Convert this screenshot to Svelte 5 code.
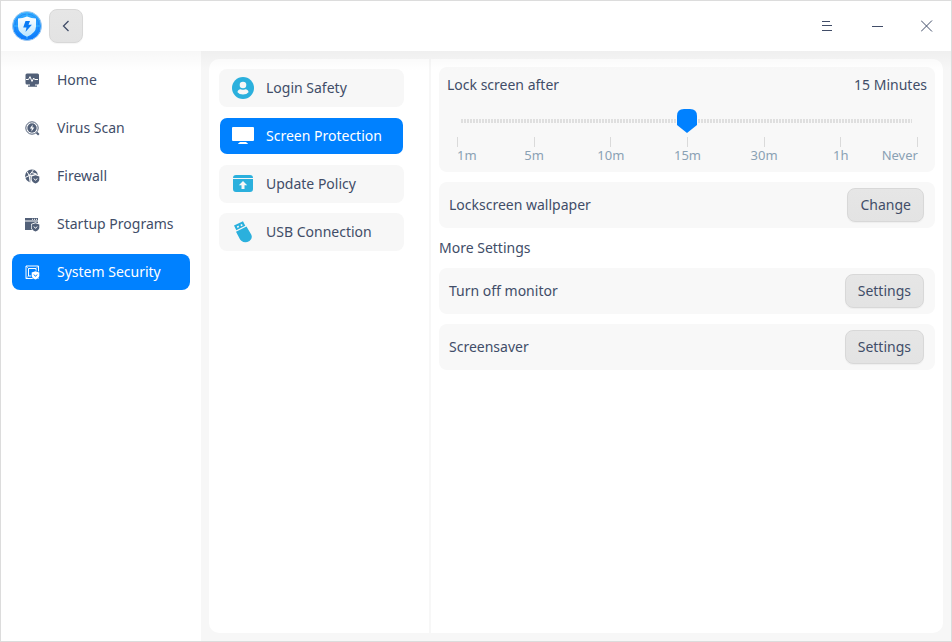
<script>
  const nav = ['Home', 'Virus Scan', 'Firewall', 'Startup Programs', 'System Security'];
  const sections = ['Login Safety', 'Screen Protection', 'Update Policy', 'USB Connection'];
  const stops = ['1m', '5m', '10m', '15m', '30m', '1h', 'Never'];
  const names = ['1 Minute', '5 Minutes', '10 Minutes', '15 Minutes', '30 Minutes', '1 Hour', 'Never'];
  let page = $state(4);
  let section = $state(1);
  let delay = $state(3);
</script>

{#snippet badge()}
  <path class="halo" d="M10.500 5.200 15 7v3.600q0 3-4.500 4.400Q6 13.600 6 10.600V7z" />
  <path d="M10.500 6.200 14.300 7.600v3q0 2.500-3.800 3.900-3.800-1.400-3.800-3.900v-3z" />
  <path class="tick" d="m8.900 9.500 1.600 1.900 1.600-1.900" />
{/snippet}

{#snippet navIcon(i)}
  <svg class="nav-icon" class:on={page === i} viewBox="0 0 15 15" aria-hidden="true">
    {#if i === 0}
      <path d="M2 .5h10.500q1.500 0 1.500 1.500v8q0 1.500-1.500 1.500H2Q.5 11.500.5 10V2Q.5.5 2 .5zM5 11.300h5v1.200h2v1.200H3v-1.200h2z" />
      <path class="tick" d="M1 6.500h2.500L5 3.600l2 4.900 1.700-3.500 1 1.500H13" />
    {:else if i === 1}
      <circle class="line" cx="7" cy="7" r="6.200" />
      <circle cx="7" cy="7" r="4.700" />
      <path class="bolt" d="M7.700 3.500 4.900 7.600h1.900L6.300 10.700l3-4.200H7.400z" />
      <path class="line thick" d="m11.500 11.500 2.300 2.300" />
    {:else if i === 2}
      <path d="M6.500.5a6.500 6.500 0 0 1 6.400 5.500L10.500 5 5.500 7v6.400A6.500 6.500 0 0 1 6.500.5z" />
      <path class="tick" d="M.3 8.500 4.200 6.500 8.500.8M2 2.500l2.200 4 1 7M4.200 6.500l5.500-.5M6.500 3.500l5 1.500" />
      {@render badge()}
    {:else if i === 3}
      <path d="M0 1h13v2.500H0zM0 4.500h13V13H0z" />
      <path class="tick" d="M7 2.300h1M9 2.300h1M11 2.300h1" />
      {@render badge()}
    {:else}
      <path class="line" d="M1 1h12.500v12.500H1zM3.500 3.500H11V11H3.500z" />
      <path class="line fine" d="m1 1 2.500 2.500M13.500 1 11 3.500M1 13.500 3.500 11" />
      {@render badge()}
    {/if}
  </svg>
{/snippet}

{#snippet sectionIcon(i)}
  <svg class="section-icon" class:on={section === i} viewBox="0 0 22 22" aria-hidden="true">
    {#if i === 0}
      <circle cx="11" cy="11" r="11" />
      <circle class="cut" cx="11" cy="8" r="3.300" />
      <path class="cut" d="M5.500 15.200q0-2.700 3.300-3 2.200 1.100 4.400 0 3.300.3 3.300 3Q14.800 17.500 11 17.500T5.500 15.200z" />
    {:else if i === 1}
      <path d="M1 2h20q1 0 1 1v12q0 1-1 1H1q-1 0-1-1V3q0-1 1-1zM8 17h6l2 1.700v.3H6v-.3z" />
    {:else if i === 2}
      <path d="M4 2h14q3 0 3 3H1q0-3 3-3zM1 6h20v10q0 3-3 3H4q-3 0-3-3z" />
      <path class="cut" d="m11 8 4.200 4.200h-2.700V16h-3v-3.800H6.800z" />
    {:else}
      <path d="m2 4.500 9-4.200 2.300 4.500-9 4.500z" />
      <path d="m4 10.700 10.500-5.200 4.700 8q1.800 4-1.700 6.400-4.500 2.700-8.200-.2-1.400-1.200-2-2.700z" />
      <path class="cut" d="m4.800 5.400 1.600-.8.700 1.500-1.500.8zM8.400 3.700l1.600-.7.700 1.400-1.600.8z" />
    {/if}
  </svg>
{/snippet}

<div class="window">
  <header>
    <svg class="logo" viewBox="0 0 30 30" aria-hidden="true">
      <defs>
        <linearGradient id="disc" x1="0" y1="0" x2="0" y2="1">
          <stop offset="0" stop-color="#36b1ff" />
          <stop offset="1" stop-color="#087bff" />
        </linearGradient>
        <linearGradient id="shield" x1="0" y1="0" x2="0" y2="1">
          <stop offset="0" stop-color="#fff" />
          <stop offset="1" stop-color="#b9e5ff" />
        </linearGradient>
      </defs>
      <circle cx="15" cy="15" r="14.500" fill="url(#disc)" stroke="#9fc8ef" />
      <circle cx="15" cy="15" r="12" fill="none" stroke="#1b72ee" stroke-opacity=".5" />
      <path d="M15 1v27M2 15h26" stroke="#43c4ff" stroke-opacity=".7" />
      <path d="M15 5.500q4.500 2 9 2v8q0 6.500-9 10.300-9-3.800-9-10.300v-8q4.500 0 9-2z" fill="url(#shield)" />
      <path d="M13.500 10h4.500l-1.500 3.700h3.400L13.500 21l1-4.600h-3.300z" fill="#087bf5" />
    </svg>
    <button class="btn back" aria-label="Back">
      <svg viewBox="0 0 8 12" width="8" height="12"><path d="M6.500 1 1.500 6l5 5" /></svg>
    </button>
    <div class="controls">
      <button aria-label="Menu"><svg viewBox="0 0 12 12"><path d="M1 1.500h8M1 5.500h10M1 10.500h10" /></svg></button>
      <button aria-label="Minimize"><svg viewBox="0 0 12 12"><path d="M1 6.500h11" /></svg></button>
      <button aria-label="Close"><svg viewBox="0 0 12 12"><path d="m0 .5 11 11M11 .5l-11 11" /></svg></button>
    </div>
  </header>

  <div class="body">
    <nav aria-label="Main">
      {#each nav as name, i}
        <button class="nav-item" class:active={page === i} onclick={() => (page = i)}>
          {@render navIcon(i)}{name}
        </button>
      {/each}
    </nav>

    <main>
      <div class="panel">
        <div class="sections">
          {#each sections as name, i}
            <button class="section" class:active={section === i} onclick={() => (section = i)}>
              {@render sectionIcon(i)}{name}
            </button>
          {/each}
        </div>

        <div class="content">
          <section class="card lock">
            <div class="lock-head">
              <label for="delay">Lock screen after</label>
              <output for="delay">{names[delay]}</output>
            </div>
            <div class="scale">
              <input id="delay" type="range" min="0" max="6" bind:value={delay} />
              <div class="stops">
                {#each stops as stop}<span class="stop">{stop}</span>{/each}
              </div>
            </div>
          </section>
          <section class="card row"><span>Lockscreen wallpaper</span><button class="btn">Change</button></section>
          <h2>More Settings</h2>
          <section class="card row"><span>Turn off monitor</span><button class="btn">Settings</button></section>
          <section class="card row"><span>Screensaver</span><button class="btn">Settings</button></section>
        </div>
      </div>
    </main>
    <div class="shade"></div>
  </div>
</div>

<style>
  .window {
    box-sizing: border-box;
    min-height: 100vh;
    display: flex;
    flex-direction: column;
    border: 1px solid #dcdcdc;
    background: #fff;
    color: #414d68;
    font: 14px/20px "Noto Sans", sans-serif;
  }
  button {
    font: inherit;
    color: inherit;
    border: 0;
    padding: 0;
    background: none;
    cursor: pointer;
  }
  svg { flex: none; }

  header {
    height: 50px;
    display: flex;
    align-items: center;
    padding: 0 12px 0 11px;
  }
  .logo { width: 30px; height: 30px; }
  .btn {
    box-sizing: border-box;
    height: 34px;
    padding: 0 12px;
    border: 1px solid #d8d8d8;
    border-radius: 8px;
    background: linear-gradient(#e6e6e6, #e3e3e3);
    box-shadow: 0 1px 1px rgba(0, 0, 0, 0.04);
  }
  .back {
    width: 34px;
    padding: 0;
    margin-left: 7px;
    display: grid;
    place-items: center;
  }
  .back svg, .controls svg {
    fill: none;
    stroke: #414d68;
  }
  .back path { stroke-width: 1.3; }
  .controls {
    margin-left: auto;
    display: flex;
    gap: 26px;
  }
  .controls button {
    width: 24px;
    height: 24px;
    display: grid;
    place-items: center;
  }
  .controls svg { width: 12px; height: 12px; }

  .body {
    flex: 1;
    display: flex;
    position: relative;
  }
  .shade {
    position: absolute;
    inset: 0 0 auto;
    height: 20px;
    background: linear-gradient(rgba(0, 0, 0, 0.03), transparent);
    pointer-events: none;
  }
  nav {
    box-sizing: border-box;
    width: 200px;
    padding: 11px;
    display: flex;
    flex-direction: column;
    gap: 12px;
  }
  .nav-item {
    width: 178px;
    height: 36px;
    display: flex;
    align-items: center;
    gap: 17px;
    padding-left: 13px;
    border-radius: 8px;
  }
  .active { background-color: #0081ff; color: #fff; }
  .nav-icon {
    width: 15px;
    height: 15px;
    --ink: #526078;
    --ground: #fff;
    fill: var(--ink);
  }
  .nav-icon.on { --ink: #fff; --ground: #0081ff; }
  .line { fill: none; stroke: var(--ink); }
  .fine { stroke-width: 0.6; }
  .thick { stroke-width: 2; }
  .tick { fill: none; stroke: var(--ground); }
  .halo, .bolt { fill: var(--ground); }

  main {
    flex: 1;
    display: flex;
    padding: 8px;
    background: #f7f7f7;
  }
  .panel {
    flex: 1;
    display: flex;
    border-radius: 10px;
    background: #fff;
  }
  .sections {
    display: flex;
    flex-direction: column;
    gap: 10px;
    padding: 10px 25px 10px 10px;
    border-right: 2px solid #f7f7f7;
  }
  .section {
    box-sizing: border-box;
    width: 185px;
    height: 38px;
    display: flex;
    align-items: center;
    gap: 12px;
    padding-left: 12px;
    border: 1px solid transparent;
    border-radius: 8px;
    background-color: #f7f7f7;
  }
  .section.active { background-color: #0081ff; background-clip: padding-box; }
  .section-icon { width: 22px; height: 22px; fill: #2bb0dd; }
  .section-icon.on { fill: #fff; }
  .cut { fill: #f7f7f7; }

  .content {
    flex: 1;
    display: flex;
    flex-direction: column;
    gap: 10px;
    padding: 8px;
  }
  .card { border-radius: 8px; background: #f8f8f8; }
  .lock { padding: 8px 8px 9px; }
  .lock-head { display: flex; justify-content: space-between; }
  .scale { padding: 14px 9px 0 10px; }
  input {
    appearance: none;
    display: block;
    width: calc(100% - 1px);
    height: 24px;
    margin: 0;
    background: repeating-linear-gradient(90deg, #dfdfdf 0 2px, transparent 2px 3px) 4px 10px / calc(100% - 9px) 4px no-repeat;
  }
  input::-webkit-slider-thumb {
    appearance: none;
    width: 20px;
    height: 24px;
    background: #0081ff;
    clip-path: path("M7 0h6q7 0 7 7v9L10 24 0 16V7Q0 0 7 0z");
  }
  .stops {
    display: flex;
    justify-content: space-between;
    padding-top: 4px;
    color: #8aa1b4;
    font-size: 13px;
    line-height: 16px;
  }
  .stop {
    width: 1px;
    display: flex;
    flex-direction: column;
    align-items: center;
  }
  .stop::before {
    content: "";
    width: 1px;
    height: 10px;
    background: #dadada;
  }
  .stop:first-child { align-items: flex-start; }
  .stop:last-child { align-items: flex-end; }
  .row {
    height: 46px;
    display: flex;
    align-items: center;
    justify-content: space-between;
    padding: 0 11px 0 10px;
  }
  h2 { margin: 0; font: inherit; }
</style>
